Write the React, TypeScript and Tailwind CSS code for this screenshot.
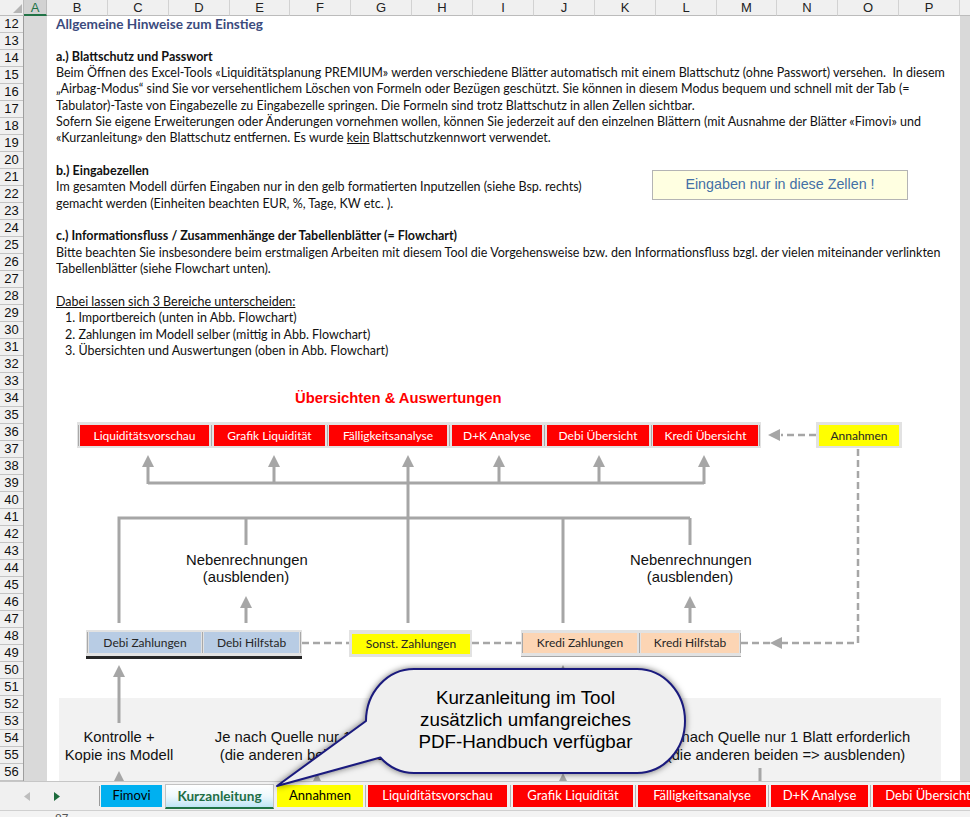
import React from 'react';

const cols = [
  { n: 'B', w: 'w-[61px]' },
  { n: 'C', w: 'w-[61px]' },
  { n: 'D', w: 'w-[61px]' },
  { n: 'E', w: 'w-[60px]' },
  { n: 'F', w: 'w-[61px]' },
  { n: 'G', w: 'w-[61px]' },
  { n: 'H', w: 'w-[61px]' },
  { n: 'I', w: 'w-[61px]' },
  { n: 'J', w: 'w-[61px]' },
  { n: 'K', w: 'w-[61px]' },
  { n: 'L', w: 'w-[61px]' },
  { n: 'M', w: 'w-[60px]' },
  { n: 'N', w: 'w-[61px]' },
  { n: 'O', w: 'w-[61px]' },
  { n: 'P', w: 'w-[61px]' },
];

const rowNums = Array.from({ length: 45 }, (_, i) => i + 12);

function Line({ children, className = '' }: { children?: React.ReactNode; className?: string }) {
  return <div className={`h-[16.35px] leading-[16.35px] whitespace-pre ${className}`}>{children}</div>;
}

function Sep({ cls }: { cls: string }) {
  return (
    <div className={`${cls} h-full flex justify-center shrink-0`}>
      <div className="w-px h-full bg-[#a9a9a9]" />
    </div>
  );
}

function TabSep() {
  return (
    <div className="w-[5px] h-[22px] mt-[3px] flex justify-center shrink-0">
      <div className="w-px h-full bg-[#b3b3b3]" />
    </div>
  );
}

const up = (x: number, t: number) => `${x},${t} ${x - 6},${t + 12} ${x + 6},${t + 12}`;
const left = (x: number, y: number) => `${x},${y} ${x + 12},${y - 6} ${x + 12},${y + 6}`;

export default function App() {
  const body = "font-['Lato',sans-serif]";
  const arial = "font-['Liberation_Sans',Arial,sans-serif]";
  return (
    <div className={`relative w-[970px] h-[817px] overflow-hidden bg-white ${body}`}>
      {/* column header row */}
      <div className={`flex h-[16px] ${arial} text-[13px] text-[#222]`}>
        <div className="relative w-[24px] h-full bg-[#f0f0f0] border-r border-b border-[#bcbcbc] shrink-0">
          <svg className="absolute right-[1px] bottom-[2px]" width="9" height="9">
            <polygon points="9,0 9,9 0,9" fill="#b5b5b5" />
          </svg>
        </div>
        <div className="w-[23px] h-full bg-[#d2d2d2] border-b-2 border-b-[#217346] border-r border-r-[#bcbcbc] flex items-center justify-center text-[#217346] shrink-0 leading-none">
          A
        </div>
        {cols.map((c) => (
          <div
            key={c.n}
            className={`${c.w} h-full shrink-0 bg-[#f0f0f0] border-r border-r-[#d2d2d2] border-b border-b-[#bcbcbc] flex items-center justify-center leading-none`}
          >
            {c.n}
          </div>
        ))}
        <div className="w-[40px] h-full shrink-0 bg-[#f0f0f0] border-b border-b-[#bcbcbc] flex items-center justify-center leading-none">
          Q
        </div>
      </div>

      {/* sheet body */}
      <div className="flex h-[765px]">
        <div className={`w-[24px] shrink-0 flex flex-col border-r border-[#9e9e9e] ${arial}`}>
          {rowNums.map((r) => (
            <div
              key={r}
              className="h-[17px] shrink-0 border-b border-[#c4c4c4] bg-[#f0f0f0] text-[13px] leading-[16px] text-center text-[#111]"
            >
              {r}
            </div>
          ))}
        </div>
        <div className="w-[23px] shrink-0 bg-[#d9d9d9]" />
        <div className="w-[913px] shrink-0 flex flex-col bg-white">
          {/* text section */}
          <div className="h-[344px] pl-[9px] text-[12.5px] text-[#111]">
            <Line className="font-bold text-[13.6px] text-[#3b4b7d]">Allgemeine Hinweise zum Einstieg</Line>
            <Line />
            <Line className="font-bold">a.) Blattschutz und Passwort</Line>
            <Line>
              Beim Öffnen des Excel-Tools «Liquiditätsplanung PREMIUM» werden verschiedene Blätter automatisch mit einem Blattschutz (ohne Passwort) versehen.  In diesem
            </Line>
            <Line>
              „Airbag-Modus“ sind Sie vor versehentlichem Löschen von Formeln oder Bezügen geschützt. Sie können in diesem Modus bequem und schnell mit der Tab (=
            </Line>
            <Line>Tabulator)-Taste von Eingabezelle zu Eingabezelle springen. Die Formeln sind trotz Blattschutz in allen Zellen sichtbar.</Line>
            <Line>
              Sofern Sie eigene Erweiterungen oder Änderungen vornehmen wollen, können Sie jederzeit auf den einzelnen Blättern (mit Ausnahme der Blätter «Fimovi» und
            </Line>
            <Line>
              «Kurzanleitung» den Blattschutz entfernen. Es wurde <span className="underline">kein</span> Blattschutzkennwort verwendet.
            </Line>
            <Line />
            <div className="flex">
              <div className="w-[596px] shrink-0">
                <Line className="font-bold">b.) Eingabezellen</Line>
                <Line>Im gesamten Modell dürfen Eingaben nur in den gelb formatierten Inputzellen (siehe Bsp. rechts)</Line>
                <Line>gemacht werden (Einheiten beachten EUR, %, Tage, KW etc. ).</Line>
              </div>
              <div
                className={`mt-[7px] w-[256px] h-[30px] bg-[#ffffe1] border border-[#b4b4b4] flex items-center justify-center text-[14.3px] text-[#4470a6] ${arial}`}
              >
                Eingaben nur in diese Zellen !
              </div>
            </div>
            <Line />
            <Line className="font-bold">c.) Informationsfluss / Zusammenhänge der Tabellenblätter (= Flowchart)</Line>
            <Line>
              Bitte beachten Sie insbesondere beim erstmaligen Arbeiten mit diesem Tool die Vorgehensweise bzw. den Informationsfluss bzgl. der vielen miteinander verlinkten
            </Line>
            <Line>Tabellenblätter (siehe Flowchart unten).</Line>
            <Line />
            <Line className="underline">Dabei lassen sich 3 Bereiche unterscheiden:</Line>
            <Line className="pl-[9px]">1. Importbereich (unten in Abb. Flowchart)</Line>
            <Line className="pl-[9px]">2. Zahlungen im Modell selber (mittig in Abb. Flowchart)</Line>
            <Line className="pl-[9px]">3. Übersichten und Auswertungen (oben in Abb. Flowchart)</Line>
          </div>

          {/* flowchart canvas */}
          <div className="relative h-[421px] overflow-hidden">
            <div className="absolute left-[12px] top-[338px] w-[882px] h-[90px] bg-[#f2f2f2]" />
            <svg className="absolute left-0 top-0" width="913" height="421" viewBox="47 360 913 421">
              <g stroke="#a6a6a6" strokeWidth="3" fill="none">
                <path d="M148 483 H704" />
                <path d="M148 484 V466 M274 484 V466 M499 484 V466 M599 484 V466 M704 484 V466" />
                <path d="M408 623 V466" />
                <path d="M119 623 V518 H690" />
                <path d="M246 518 V545 M563 518 V623 M690 518 V545" />
                <path d="M246 623 V607 M690 623 V607" />
                <path d="M119 723 V677" />
                <path d="M563 700 V677" />
                <path d="M760 768 V781" />
              </g>
              <g fill="#a6a6a6">
                {[
                  [148, 455],
                  [274, 455],
                  [408, 455],
                  [499, 455],
                  [599, 455],
                  [704, 455],
                  [246, 596],
                  [690, 596],
                  [119, 665],
                  [563, 665],
                  [119, 771],
                  [317, 773],
                  [563, 773],
                ].map(([x, t]) => (
                  <polygon key={`${x}-${t}`} points={up(x, t)} />
                ))}
                <polygon points={left(768, 435)} />
                <polygon points={left(770, 643)} />
              </g>
              <g stroke="#a6a6a6" strokeWidth="2.5" strokeDasharray="7 4" fill="none">
                <path d="M816 435 H781" />
                <path d="M858 449 V643 H782" />
                <path d="M770 643 H741" />
                <path d="M302 643 H349" />
                <path d="M472 643 H521" />
              </g>
            </svg>

            <div className={`absolute left-[248px] top-[29px] leading-[18px] text-[14.8px] font-bold text-[#ff0000] whitespace-nowrap ${arial}`}>
              Übersichten &amp; Auswertungen
            </div>

            {/* red overview row */}
            <div className="absolute left-[30px] top-[62px] w-[684px] h-[26px] bg-[#e2e2e2] flex pt-[3px] pb-[2px] text-[12px] text-white">
              <Sep cls="w-[3px]" />
              <div className="w-[129px] shrink-0 bg-[#ff0000] flex items-center justify-center">Liquiditätsvorschau</div>
              <Sep cls="w-[5px]" />
              <div className="w-[111px] shrink-0 bg-[#ff0000] flex items-center justify-center">Grafik Liquidität</div>
              <Sep cls="w-[4px]" />
              <div className="w-[118px] shrink-0 bg-[#ff0000] flex items-center justify-center">Fälligkeitsanalyse</div>
              <Sep cls="w-[5px]" />
              <div className="w-[90px] shrink-0 bg-[#ff0000] flex items-center justify-center">D+K Analyse</div>
              <Sep cls="w-[5px]" />
              <div className="w-[102px] shrink-0 bg-[#ff0000] flex items-center justify-center">Debi Übersicht</div>
              <Sep cls="w-[4px]" />
              <div className="w-[105px] shrink-0 bg-[#ff0000] flex items-center justify-center">Kredi Übersicht</div>
              <Sep cls="w-[3px]" />
            </div>

            {/* Annahmen */}
            <div className="absolute left-[769px] top-[62px] w-[86px] h-[26px] bg-[#e2e2e2] flex px-[3px] pt-[3px] pb-[2px] text-[12px] text-[#262626]">
              <div className="flex-1 bg-[#ffff00] flex items-center justify-center">Annahmen</div>
            </div>

            {/* Nebenrechnungen */}
            <div className={`absolute left-[139px] top-[192px] w-[120px] text-center leading-[17px] text-[14.8px] text-[#111] ${arial}`}>
              Nebenrechnungen
              <br />
              (ausblenden)
            </div>
            <div className={`absolute left-[583px] top-[192px] w-[120px] text-center leading-[17px] text-[14.8px] text-[#111] ${arial}`}>
              Nebenrechnungen
              <br />
              (ausblenden)
            </div>

            {/* Debi */}
            <div className="absolute left-[39px] top-[270px] w-[216px] flex flex-col text-[12px] text-[#262626]">
              <div className="h-[26px] bg-[#e2e2e2] flex pt-[2px] pb-[3px]">
                <Sep cls="w-[3px]" />
                <div className="w-[112px] shrink-0 bg-[#b8cce4] flex items-center justify-center">Debi Zahlungen</div>
                <Sep cls="w-[3px]" />
                <div className="w-[95px] shrink-0 bg-[#b8cce4] flex items-center justify-center">Debi Hilfstab</div>
                <Sep cls="w-[3px]" />
              </div>
              <div className="h-[3px] bg-[#262626]" />
            </div>

            {/* Sonst */}
            <div className="absolute left-[302px] top-[270px] w-[123px] h-[27px] bg-[#e2e2e2] flex pl-[3px] pr-[2px] pt-[4px] pb-[3px] text-[12px] text-[#262626]">
              <div className="flex-1 bg-[#ffff00] flex items-center justify-center">Sonst. Zahlungen</div>
            </div>

            {/* Kredi */}
            <div className="absolute left-[474px] top-[270px] w-[220px] h-[27px] bg-[#e2e2e2] border-b border-[#a6a6a6] flex pt-[3px] pb-[3px] text-[12px] text-[#262626]">
              <Sep cls="w-[2px]" />
              <div className="w-[114px] shrink-0 bg-[#fcd5b4] flex items-center justify-center">Kredi Zahlungen</div>
              <Sep cls="w-[4px]" />
              <div className="w-[98px] shrink-0 bg-[#fcd5b4] flex items-center justify-center">Kredi Hilfstab</div>
              <Sep cls="w-[2px]" />
            </div>

            {/* import area labels */}
            <div className={`absolute left-[2px] top-[368px] w-[140px] text-center leading-[18px] text-[14.8px] text-[#111] ${arial}`}>
              Kontrolle +
              <br />
              Kopie ins Modell
            </div>
            <div className={`absolute left-[152px] top-[368px] w-[280px] text-center leading-[18px] text-[14.8px] text-[#111] whitespace-nowrap ${arial}`}>
              Je nach Quelle nur 1 Blatt erforderlich
              <br />
              (die anderen beiden =&gt; ausblenden)
            </div>
            <div className={`absolute left-[599px] top-[368px] w-[280px] text-center leading-[18px] text-[14.8px] text-[#111] whitespace-nowrap ${arial}`}>
              Je nach Quelle nur 1 Blatt erforderlich
              <br />
              (die anderen beiden =&gt; ausblenden)
            </div>
          </div>
        </div>
        <div className="flex-1 bg-[#d9d9d9]" />
      </div>

      {/* sheet tab bar */}
      <div className="flex items-start h-[29px] border-t border-[#c6c6c6] bg-[#f0f0f0] text-[13px]">
        <div className="w-[99px] h-full shrink-0 flex items-center">
          <svg className="ml-[24px]" width="6" height="9">
            <polygon points="6,0 6,9 0,4.5" fill="#bdbdbd" />
          </svg>
          <svg className="ml-[24px]" width="6" height="9">
            <polygon points="0,0 6,4.5 0,9" fill="#1d6b3c" />
          </svg>
        </div>
        <div className="w-px h-[20px] mt-[4px] bg-[#9a9a9a] shrink-0" />
        <div className="ml-[1px] w-[61px] h-[22px] mt-[3px] shrink-0 bg-[#00b0f0] text-black flex items-center justify-center">Fimovi</div>
        <div className="ml-[3px] w-[109px] h-[25px] mt-[2px] shrink-0 border border-[#c2c2c2] border-b-2 border-b-[#217346] bg-gradient-to-b from-white via-[#eef8fc] to-[#bfe5f6] text-[#1f6e45] text-[13.6px] font-bold flex items-center justify-center">
          Kurzanleitung
        </div>
        <div className="ml-[3px] w-[86px] h-[22px] mt-[3px] shrink-0 bg-[#ffff00] text-black flex items-center justify-center">Annahmen</div>
        <TabSep />
        <div className="w-[139px] h-[22px] mt-[3px] shrink-0 bg-[#ff0000] text-white flex items-center justify-center">Liquiditätsvorschau</div>
        <div className="w-[6px] h-[22px] mt-[3px] flex justify-center shrink-0">
          <div className="w-px h-full bg-[#b3b3b3]" />
        </div>
        <div className="w-[120px] h-[22px] mt-[3px] shrink-0 bg-[#ff0000] text-white flex items-center justify-center">Grafik Liquidität</div>
        <TabSep />
        <div className="w-[128px] h-[22px] mt-[3px] shrink-0 bg-[#ff0000] text-white flex items-center justify-center">Fälligkeitsanalyse</div>
        <TabSep />
        <div className="w-[97px] h-[22px] mt-[3px] shrink-0 bg-[#ff0000] text-white flex items-center justify-center">D+K Analyse</div>
        <TabSep />
        <div className="w-[110px] h-[22px] mt-[3px] shrink-0 bg-[#ff0000] text-white flex items-center justify-center">Debi Übersicht</div>
      </div>

      {/* status bar */}
      <div className="relative h-[7px] bg-[#f3f3f3] border-t border-[#d0d0d0] overflow-hidden">
        <span className={`absolute left-[55px] top-[2px] text-[12px] leading-[12px] text-[#555] ${arial}`}>87</span>
      </div>

      {/* callout bubble */}
      <svg
        className="absolute left-[265px] top-[660px] z-10 drop-shadow-[0_0_3px_rgba(0,0,0,0.55)]"
        width="430"
        height="135"
        viewBox="265 660 430 135"
      >
        <path
          d="M414 669 H637 A48 52 0 0 1 685 721 A48 52 0 0 1 637 773 H414 A48 52 0 0 1 380.3 757.5 L277 786 L366 721 A48 52 0 0 1 414 669 Z"
          fill="#efefef"
          stroke="#1a1a7e"
          strokeWidth="2"
          strokeLinejoin="round"
        />
      </svg>
      <div className={`absolute left-[366px] top-[687px] w-[319px] z-20 text-center leading-[22px] text-[18.8px] text-black ${arial}`}>
        Kurzanleitung im Tool
        <br />
        zusätzlich umfangreiches
        <br />
        PDF-Handbuch verfügbar
      </div>
    </div>
  );
}
